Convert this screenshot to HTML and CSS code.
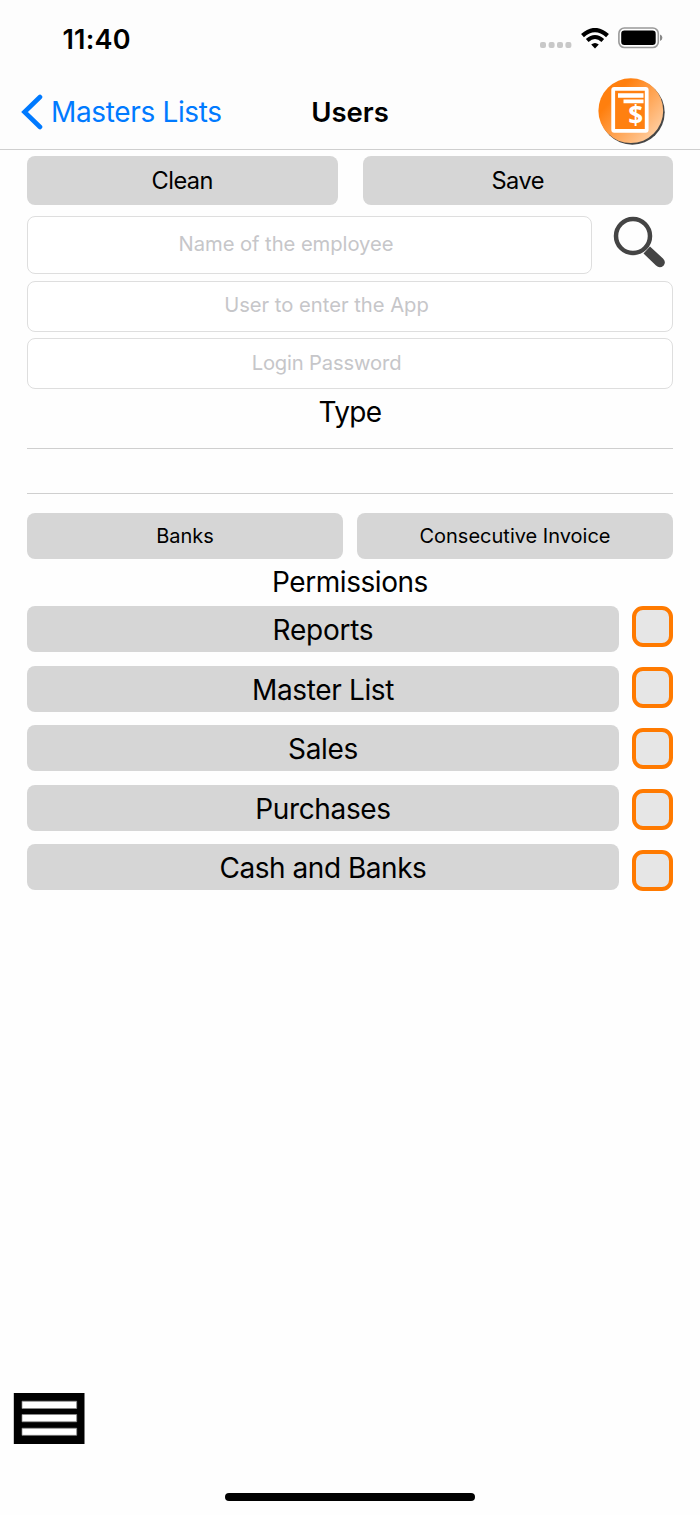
FILE: index.html
```html
<!DOCTYPE html>
<html lang="en">
<head>
<meta charset="utf-8">
<title>Users</title>
<link rel="stylesheet" href="styles.css">
</head>
<body>
<div class="screen">
  <header class="header">
    <div class="status">
      <span class="time">11:40</span>
      <div class="indicators">
        <svg class="signal" width="32" height="8" viewBox="0 0 32 8"><g fill="#c8c8c8"><rect x="0" y="1" width="6" height="6" rx="2"/><rect x="8.6" y="1" width="6" height="6" rx="2"/><rect x="17" y="1" width="6" height="6" rx="2"/><rect x="25.4" y="1" width="6" height="6" rx="2"/></g></svg>
        <svg class="wifi" width="28" height="21" viewBox="0 0 28 21"><path d="M1.500 7.600Q14-3.400 26.500 7.600" fill="none" stroke="#000" stroke-width="4.300"/><path d="M6.200 12.500Q14 5.500 21.800 12.500" fill="none" stroke="#000" stroke-width="4"/><path d="M10.200 16.600Q14 13.300 17.800 16.600L14 20.400Z"/></svg>
        <svg class="battery" width="45" height="22" viewBox="0 0 45 22"><rect x=".9" y="1" width="39.400" height="19.500" rx="5.500" fill="none" stroke="#999" stroke-width="1.600"/><rect x="3.200" y="3.500" width="34.500" height="14.500" rx="3.200"/><path d="M42 7.500q2.400 1 2.400 3.300t-2.400 3.300z" fill="#888"/></svg>
      </div>
    </div>
    <nav class="nav">
      <a class="back"><svg width="22" height="36" viewBox="0 0 22 36"><path d="M19 3L3.500 18L19 33" fill="none" stroke="#007aff" stroke-width="4.600" stroke-linecap="round"/></svg><span class="back-label">Masters Lists</span></a>
      <h1 class="title">Users</h1>
      <svg class="logo" width="70" height="70" viewBox="0 0 70 70">
        <defs>
          <linearGradient id="orange" x1=".1" y1=".1" x2=".95" y2=".85"><stop offset=".2" stop-color="#ff7f0e"/><stop offset="1" stop-color="#ffd0a5"/></linearGradient>
          <filter id="soft"><feGaussianBlur stdDeviation=".7"/></filter>
        </defs>
        <circle cx="35.300" cy="35.300" r="32.400" fill="#444" filter="url(#soft)"/>
        <circle cx="33.800" cy="33.700" r="32.400" fill="url(#orange)"/>
        <rect x="16.200" y="11.800" width="33.500" height="42" rx="1" fill="#ff8010" stroke="#fff" stroke-width="3.800"/>
        <path d="M21 16.300H46.500V20.800H21ZM26.500 22.500H46.500V26.300H26.500Z" fill="#fff"/>
        <text x="38.800" y="48" text-anchor="middle" class="logo-sign">$</text>
      </svg>
    </nav>
  </header>
  <main class="form">
    <div class="actions"><button class="btn mid clean">Clean</button><button class="btn mid save">Save</button></div>
    <div class="search-row">
      <div class="field employee">Name of the employee</div>
      <svg class="search" width="54" height="54" viewBox="0 0 54 54"><circle cx="21" cy="20" r="17" fill="none" stroke="#444" stroke-width="4.500"/><path d="M38 30.500L51 42.500Q54.500 46 51.500 49.800Q47.500 53 44 49.500L31.500 37.500Z" fill="#444"/></svg>
    </div>
    <div class="field user">User to enter the App</div>
    <div class="field password">Login Password</div>
    <h2 class="heading type">Type</h2>
    <div class="picker"></div>
    <div class="links"><button class="btn small banks">Banks</button><button class="btn small invoice">Consecutive Invoice</button></div>
    <h2 class="heading permissions">Permissions</h2>
    <div class="grants">
      <div class="names">
        <button class="btn large reports">Reports</button>
        <button class="btn large master">Master List</button>
        <button class="btn large sales">Sales</button>
        <button class="btn large purchases">Purchases</button>
        <button class="btn large cash">Cash and Banks</button>
      </div>
      <div class="checks"><span class="check"></span><span class="check"></span><span class="check"></span><span class="check"></span><span class="check"></span></div>
    </div>
  </main>
  <footer class="footer">
    <svg class="menu" width="72" height="52" viewBox="0 0 72 52"><rect x=".8" y="0" width="70.700" height="51"/><path d="M9 8.200H63.700V15.500H9ZM9 21.500H63.700V28.800H9ZM9 35.200H63.700V42.300H9Z" fill="#fff" stroke="#888" stroke-width=".7"/></svg>
    <div class="home"></div>
  </footer>
</div>
</body>
</html>
```
FILE: styles.css
```css
* { box-sizing: border-box; }
body { margin: 0; background: #fff; color: #000; font-family: Inter, "Liberation Sans", sans-serif; }
.screen { display: flex; flex-direction: column; height: 1515px; background: #fefefe; }
.header { height: 150px; border-bottom: 1px solid #cfcfcf; background: #fdfdfd; }
.status { display: flex; justify-content: space-between; height: 76px; padding: 22px 37px 0 62.500px; }
.time { font-size: 27px; font-weight: 600; line-height: 35px; letter-spacing: .2px; }
.indicators { display: flex; align-items: flex-start; }
.signal { margin-top: 18.5px; }
.wifi { margin: 6px 0 0 8.500px; }
.battery { margin: 5px 0 0 9.500px; }
.nav { display: grid; grid-template-columns: 1fr auto 1fr; align-items: center; height: 71px; padding: 0 20px; }
.back { display: flex; align-items: center; gap: 8px; padding-left: 1px; color: #007aff; font-size: 28px; }
.back-label { letter-spacing: -.35px; }
.title { margin: 0; font-size: 27.500px; font-weight: 600; }
.logo { justify-self: end; margin-right: 13px; }
.logo-sign { font: bold 26px "Open Sans", sans-serif; fill: #fff; }
.form { display: flex; flex-direction: column; padding: 5.600px 27px 0; }
.actions { display: grid; grid-template-columns: 1fr 1fr; gap: 25px; }
.btn { padding: 0; border: 0; border-radius: 8px; background: #d6d6d6; color: #000; font-family: inherit; text-align: center; }
.mid { height: 49.300px; font-size: 23.600px; letter-spacing: -.5px; }
.search-row { display: flex; justify-content: space-between; margin-top: 11.500px; padding-right: 7px; }
.field { display: flex; align-items: center; justify-content: center; padding: 0 47px 3.500px 0; border: 1px solid #dedede; border-radius: 8px; background: #fff; color: #c6c6c9; font-size: 20.200px; }
.employee { width: 565px; height: 58px; letter-spacing: -.05px; }
.user { height: 51px; margin-top: 6.500px; }
.password { height: 51px; margin-top: 6.500px; letter-spacing: -.15px; }
.heading { margin: 0; font-size: 28px; font-weight: 400; line-height: 34px; text-align: center; }
.type { margin-top: 6px; letter-spacing: -.6px; }
.picker { height: 46px; margin-top: 19px; border: solid #cfcfcf; border-width: 1px 0; }
.links { display: grid; grid-template-columns: 1fr 1fr; gap: 14px; margin-top: 18.900px; }
.small { height: 45.800px; padding-bottom: 1px; font-size: 20px; }
.permissions { margin-top: 5.500px; letter-spacing: -.45px; }
.grants { display: flex; justify-content: space-between; margin-top: 7.700px; }
.names { display: flex; flex-direction: column; gap: 13.300px; width: 592px; }
.large { height: 46.200px; padding-top: 1.500px; font-size: 28px; letter-spacing: -.35px; }
.reports { letter-spacing: -.25px; }
.cash { letter-spacing: -.47px; }
.checks { display: flex; flex-direction: column; gap: 20px; margin-top: -.700px; }
.check { width: 41px; height: 41px; border: 4px solid #ff7a00; border-radius: 11px; background: #e6e6e6; }
.footer { display: flex; flex-direction: column; height: 122px; margin-top: auto; padding-left: 13px; }
.home { width: 250px; height: 8.500px; margin: 47.500px 0 0 212px; border-radius: 5px; background: #000; }
```
